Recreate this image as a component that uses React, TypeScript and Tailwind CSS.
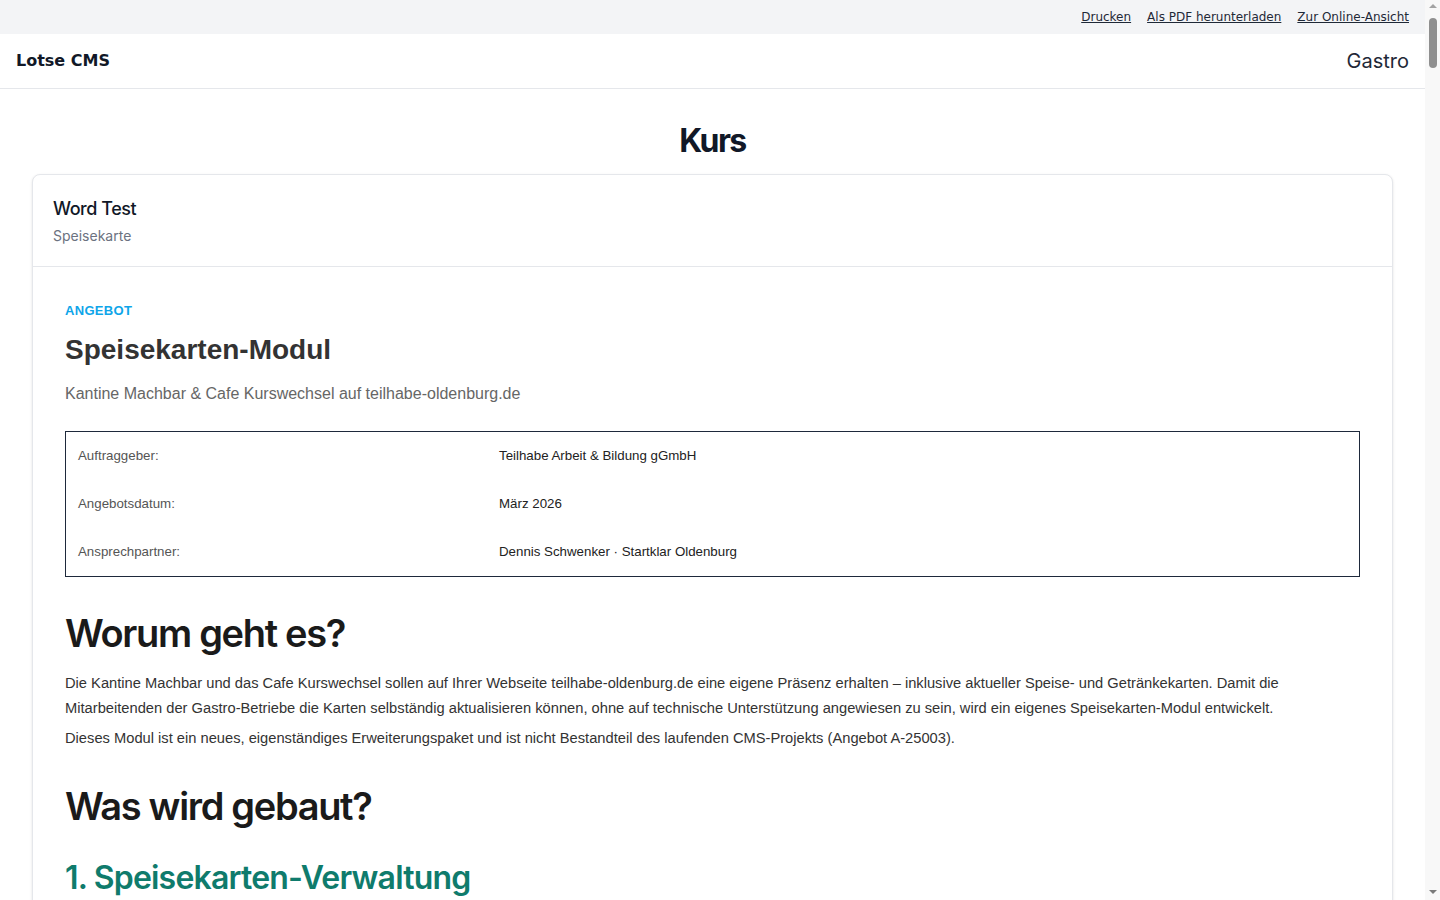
import React from "react"

const sans = "font-['Liberation_Sans',Arial,sans-serif]"
const head = "font-['Inter',sans-serif]"
const deja = "font-['DejaVu_Sans',sans-serif]"

const meta = [
  { label: "Auftraggeber:", value: "Teilhabe Arbeit & Bildung gGmbH" },
  { label: "Angebotsdatum:", value: "März 2026" },
  { label: "Ansprechpartner:", value: "Dennis Schwenker · Startklar Oldenburg" },
]

export default function App() {
  return (
    <div className={`flex h-screen overflow-hidden bg-white ${deja}`}>
      <div className="h-full min-w-0 flex-1 overflow-hidden">
        {/* Top action bar */}
        <div className="flex h-[34px] items-center justify-end gap-4 bg-[#f3f4f6] px-4 text-xs text-[#1f2937]">
          <a href="#" className="underline">Drucken</a>
          <a href="#" className="underline">Als PDF herunterladen</a>
          <a href="#" className="underline">Zur Online-Ansicht</a>
        </div>

        {/* Header */}
        <header className="flex h-[55px] items-center justify-between border-b border-[#e5e7eb] px-4">
          <span className="text-base font-bold text-[#111827]">Lotse CMS</span>
          <span className={`${head} text-xl text-[#1f2937]`}>Gastro</span>
        </header>

        <main className="px-8 pt-8 pb-16">
          <h1 className={`${head} mb-[13px] text-center text-[32px] leading-[40px] font-bold tracking-[-0.05em] text-[#111827]`}>
            Kurs
          </h1>

          <div className="rounded-lg border border-[#e5e7eb] bg-white shadow-sm">
            <div className="border-b border-[#e5e7eb] px-5 pt-5 pb-5">
              <div className={`${head} text-lg leading-7 font-medium tracking-tight text-[#111827]`}>Word Test</div>
              <div className={`${head} mt-[3px] text-sm leading-5 text-[#6b7280]`}>Speisekarte</div>
            </div>

            <div className={`${sans} px-8 pt-9 pb-12 text-[#333]`}>
              <div className="text-[13px] leading-4 font-bold tracking-wide text-[#0ea5e9]">ANGEBOT</div>
              <h2 className="mt-[14px] text-[28px] leading-[34px] font-bold text-[#333]">Speisekarten-Modul</h2>
              <p className="mt-[15px] text-base leading-6 text-[#666]">
                Kantine Machbar &amp; Cafe Kurswechsel auf teilhabe-oldenburg.de
              </p>

              <div className="mt-[25px] border border-[#1e293b]">
                {meta.map((row) => (
                  <div key={row.label} className="grid h-12 grid-cols-[421px_1fr] items-center px-3 text-[13.3px]">
                    <span className="text-[#555]">{row.label}</span>
                    <span className="text-[#222]">{row.value}</span>
                  </div>
                ))}
              </div>

              <h2 className={`${head} mt-8 text-[38px] leading-[48px] font-semibold tracking-[-0.035em] text-[#1a1a1a]`}>
                Worum geht es?
              </h2>
              <p className="mt-[14px] mb-[5px] text-[14.7px] leading-[25px]">
                Die Kantine Machbar und das Cafe Kurswechsel sollen auf Ihrer Webseite teilhabe-oldenburg.de eine eigene
                Präsenz erhalten – inklusive aktueller Speise- und Getränkekarten. Damit die Mitarbeitenden der
                Gastro-Betriebe die Karten selbständig aktualisieren können, ohne auf technische Unterstützung angewiesen
                zu sein, wird ein eigenes Speisekarten-Modul entwickelt.
              </p>
              <p className="text-[14.7px] leading-[25px]">
                Dieses Modul ist ein neues, eigenständiges Erweiterungspaket und ist nicht Bestandteil des laufenden
                CMS-Projekts (Angebot A-25003).
              </p>

              <h2 className={`${head} mt-[31px] text-[38px] leading-[48px] font-semibold tracking-[-0.035em] text-[#1a1a1a]`}>
                Was wird gebaut?
              </h2>
              <h3 className={`${head} mt-[28px] text-[32px] leading-[40px] font-semibold tracking-tight text-[#0f7b6c]`}>
                1. Speisekarten-Verwaltung
              </h3>
              <p className="mt-3 text-[14.7px] leading-[25px]">
                Im Backend können Speise- und Getränkekarten angelegt, bearbeitet und veröffentlicht werden. Gerichte
                lassen sich mit Preis, Beschreibung und Allergenen pflegen.
              </p>
            </div>
          </div>
        </main>
      </div>

      {/* Scrollbar */}
      <div className="flex w-[15px] shrink-0 flex-col items-center bg-[#f8f8f8]">
        <div className="mt-[4px] h-0 w-0 border-x-[4px] border-b-[4px] border-x-transparent border-b-[#a3a3a3]" />
        <div className="mt-[10px] h-[50px] w-[8px] rounded-full bg-[#8f8f8f]" />
        <div className="flex-1" />
        <div className="mb-[6px] h-0 w-0 border-x-[4px] border-t-[4px] border-x-transparent border-t-[#7a7a7a]" />
      </div>
    </div>
  )
}
